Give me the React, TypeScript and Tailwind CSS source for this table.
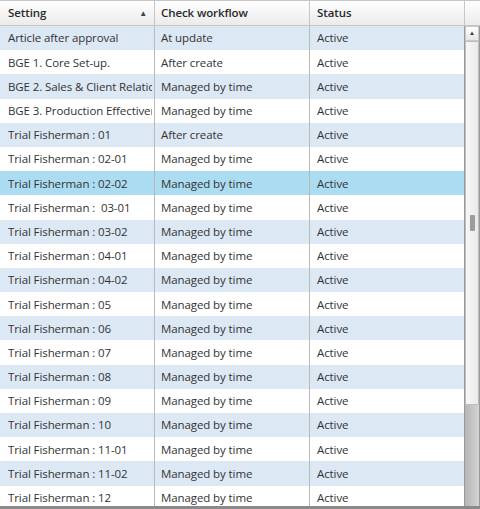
import React from "react"

const rows = [
  { setting: "Article after approval", check: "At update", status: "Active" },
  { setting: "BGE 1. Core Set-up.", check: "After create", status: "Active" },
  { setting: "BGE 2. Sales & Client Relations", check: "Managed by time", status: "Active" },
  { setting: "BGE 3. Production Effectiveness", check: "Managed by time", status: "Active" },
  { setting: "Trial Fisherman : 01", check: "After create", status: "Active" },
  { setting: "Trial Fisherman : 02-01", check: "Managed by time", status: "Active" },
  { setting: "Trial Fisherman : 02-02", check: "Managed by time", status: "Active" },
  { setting: "Trial Fisherman :\u00a0 03-01", check: "Managed by time", status: "Active" },
  { setting: "Trial Fisherman : 03-02", check: "Managed by time", status: "Active" },
  { setting: "Trial Fisherman : 04-01", check: "Managed by time", status: "Active" },
  { setting: "Trial Fisherman : 04-02", check: "Managed by time", status: "Active" },
  { setting: "Trial Fisherman : 05", check: "Managed by time", status: "Active" },
  { setting: "Trial Fisherman : 06", check: "Managed by time", status: "Active" },
  { setting: "Trial Fisherman : 07", check: "Managed by time", status: "Active" },
  { setting: "Trial Fisherman : 08", check: "Managed by time", status: "Active" },
  { setting: "Trial Fisherman : 09", check: "Managed by time", status: "Active" },
  { setting: "Trial Fisherman : 10", check: "Managed by time", status: "Active" },
  { setting: "Trial Fisherman : 11-01", check: "Managed by time", status: "Active" },
  { setting: "Trial Fisherman : 11-02", check: "Managed by time", status: "Active" },
  { setting: "Trial Fisherman : 12", check: "Managed by time", status: "Active" },
]

const selected = 6

export default function App() {
  return (
    <div className="h-[509px] w-[480px] overflow-hidden bg-white font-['Open_Sans',sans-serif] text-[11.5px] tracking-[-0.1px] text-[#333]">
      <div className="flex h-full flex-col border-b-[3px] border-[#8a8a8a]">
        {/* Header */}
        <div className="flex h-[26px] shrink-0 border-t border-b border-[#c6c6c6] bg-gradient-to-b from-white to-[#ebebeb] font-semibold text-[#2a2a2a]">
          <div className="flex w-[155px] items-center justify-between border-r border-[#c6c6c6] pl-2 pr-[7px]">
            <span>Setting</span>
            <span className="text-[8px] text-[#444]">▲</span>
          </div>
          <div className="flex w-[155px] items-center border-r border-[#c6c6c6] pl-[6px]">Check workflow</div>
          <div className="flex w-[155px] items-center border-r border-[#c6c6c6] pl-[7px]">Status</div>
          <div className="flex-1" />
        </div>

        <div className="flex min-h-0 flex-1">
          {/* Rows */}
          <div className="w-[465px] overflow-hidden">
            {rows.map((r, i) => (
              <div
                key={i}
                className={`flex h-[24.2px] items-center ${
                  i === selected ? "bg-[#acdcf2]" : i % 2 === 0 ? "bg-[#dde8f5]" : "bg-white"
                }`}
              >
                <div className="flex h-full w-[155px] items-center overflow-hidden whitespace-nowrap border-r border-[#b9b9b9] pl-2 pr-[2px]">
                  <span className="block min-w-0 overflow-hidden">{r.setting}</span>
                </div>
                <div className="flex h-full w-[155px] items-center whitespace-nowrap border-r border-[#b9b9b9] pl-[6px]">
                  {r.check}
                </div>
                <div className="flex h-full w-[155px] items-center whitespace-nowrap border-r border-[#9a9a9a] pl-[7px]">
                  {r.status}
                </div>
              </div>
            ))}
          </div>

          {/* Scrollbar */}
          <div className="flex w-[15px] flex-col border-r border-[#9a9a9a] bg-gradient-to-r from-[#b5b5b5] to-[#d5d5d5]">
            <div className="flex h-[15px] shrink-0 items-center justify-center border border-[#c8c8c8] bg-gradient-to-b from-white to-[#e6e6e6] text-[6px] text-[#333]">
              ▲
            </div>
            <div className="flex h-[364px] shrink-0 items-center justify-center border border-[#bdbdbd] bg-gradient-to-r from-[#f7f7f7] to-[#e9e9e9]">
              <div className="h-[16px] w-[5px] rounded-[1px] bg-[#9c9c9c]" />
            </div>
            <div className="flex-1" />
          </div>
        </div>
      </div>
    </div>
  )
}
